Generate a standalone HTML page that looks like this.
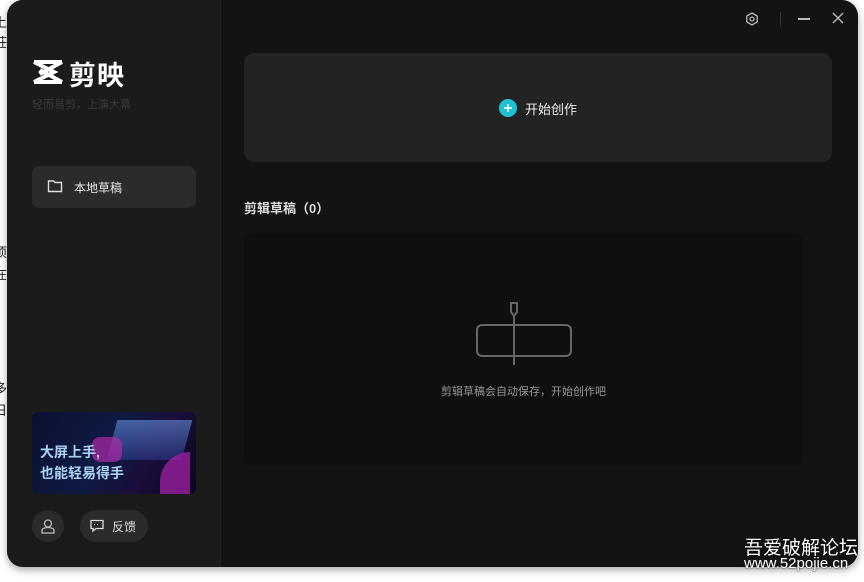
<!DOCTYPE html>
<html><head><meta charset="utf-8"><style>
*{margin:0;padding:0;box-sizing:border-box}
body{width:864px;height:582px;background:#fff;position:relative;overflow:hidden;font-family:"Liberation Sans","Noto Sans CJK SC",sans-serif}
.win{position:absolute;left:7px;top:0;width:851px;height:567px;border-radius:16px;background:#131313;overflow:hidden;box-shadow:0 3px 8px rgba(0,0,0,.35)}
.side{position:absolute;left:0;top:0;width:214px;height:567px;background:#1b1b1b;border-right:1px solid #222}
.abs{position:absolute}
.edge{position:absolute;font-size:13px;color:#222;left:-6px}
</style></head><body>
<div class="edge" style="top:12px">上</div><div class="edge" style="top:32px">莊</div>
<div class="edge" style="top:242px">项</div><div class="edge" style="top:264px">在</div>
<div class="edge" style="top:378px">多</div><div class="edge" style="top:400px">日</div>
<div class="win">
<div class="side">
 <svg class="abs" style="left:25px;top:60px" width="32" height="24" viewBox="0 0 32 24"><path d="M2 2h28M2 22h28M30 2L8 14a3 3 0 0 0 0-4M30 22L8 10" fill="none" stroke="#fff" stroke-width="4"/><path d="M2 2l20 10-20 10" fill="none" stroke="#fff" stroke-width="4"/></svg>
 <div class="abs" style="left:62px;top:54px;font-size:27px;font-weight:bold;color:#fff;letter-spacing:1px">剪映</div>
 <div class="abs" style="left:25px;top:96px;font-size:11px;color:#3a3a3a">轻而易剪，上演大幕</div>
 <div class="abs" style="left:25px;top:166px;width:164px;height:42px;border-radius:8px;background:#2b2b2b"></div>
 <svg class="abs" style="left:40px;top:179px" width="16" height="14" viewBox="0 0 16 14"><path d="M1.5 2h5l1.5 1.5h6.5v9h-13z" fill="none" stroke="#ddd" stroke-width="1.4"/></svg>
 <div class="abs" style="left:67px;top:179px;font-size:12px;color:#e8e8e8">本地草稿</div>
 <div class="abs" style="left:25px;top:412px;width:164px;height:82px;border-radius:6px;overflow:hidden;background:linear-gradient(120deg,#0a1030 0%,#101a44 45%,#1a0d3a 70%,#08081a 100%)">
  <div class="abs" style="left:80px;top:8px;width:75px;height:40px;background:linear-gradient(180deg,rgba(120,170,255,.5),rgba(60,100,220,.3));transform:skewX(-15deg)"></div>
  <div class="abs" style="left:60px;top:25px;width:30px;height:25px;background:#b02aa8;border-radius:8px;opacity:.7"></div>
  <div class="abs" style="left:128px;top:40px;width:30px;height:42px;background:#9a1ea0;border-radius:30px 0 0 0;opacity:.8"></div>
  <div class="abs" style="left:8px;top:30px;font-size:14px;font-weight:bold;color:#a9d4f5;line-height:21px">大屏上手,<br>也能轻易得手</div>
 </div>
 <div class="abs" style="left:25px;top:510px;width:32px;height:32px;border-radius:50%;background:#2b2b2b"></div>
 <svg class="abs" style="left:32px;top:517px" width="18" height="18" viewBox="0 0 18 18"><circle cx="9" cy="6.5" r="3.5" fill="none" stroke="#bbb" stroke-width="1.3"/><path d="M3 16v-2.5c0-1.5 2-3 6-3s6 1.5 6 3V16z" fill="none" stroke="#bbb" stroke-width="1.3"/></svg>
 <div class="abs" style="left:73px;top:510px;width:68px;height:32px;border-radius:16px;background:#2b2b2b"></div>
 <svg class="abs" style="left:83px;top:519px" width="14" height="14" viewBox="0 0 14 14"><path d="M1 1.5h12v8H6l-3 2.5v-2.5H1z" fill="none" stroke="#ddd" stroke-width="1.3"/><path d="M4 5.5h1M7 5.5h1M10 5.5h0" stroke="#ddd" stroke-width="1.3"/></svg>
 <div class="abs" style="left:105px;top:518px;font-size:12px;color:#ddd">反馈</div>
</div>
<svg class="abs" style="left:738px;top:12px" width="14" height="14" viewBox="0 0 14 14"><path d="M7 1l5.2 3v6L7 13 1.8 10V4z" fill="none" stroke="#bbb" stroke-width="1.3"/><circle cx="7" cy="7" r="2" fill="none" stroke="#bbb" stroke-width="1.3"/></svg>
<div class="abs" style="left:773px;top:12px;width:1px;height:14px;background:#333"></div>
<div class="abs" style="left:791px;top:18px;width:12px;height:1.5px;background:#bbb"></div>
<svg class="abs" style="left:825px;top:12px" width="12" height="12" viewBox="0 0 12 12"><path d="M1 1l10 10M11 1L1 11" stroke="#bbb" stroke-width="1.3"/></svg>
<div class="abs" style="left:237px;top:53px;width:588px;height:109px;border-radius:10px;background:#232323"></div>
<div class="abs" style="left:492px;top:99px;width:18px;height:18px;border-radius:50%;background:#1fc1d4"></div>
<svg class="abs" style="left:492px;top:99px" width="18" height="18" viewBox="0 0 18 18"><path d="M9 5v8M5 9h8" stroke="#fff" stroke-width="1.5"/></svg>
<div class="abs" style="left:518px;top:99px;font-size:13px;color:#eee">开始创作</div>
<div class="abs" style="left:237px;top:198px;font-size:13px;font-weight:bold;color:#ddd">剪辑草稿（0）</div>
<div class="abs" style="left:237px;top:233px;width:559px;height:232px;border-radius:6px;background:#0f0f0f"></div>
<svg class="abs" style="left:468px;top:300px" width="98" height="66" viewBox="0 0 98 66"><rect x="2" y="25" width="94" height="31" rx="5" fill="none" stroke="#666" stroke-width="2"/><path d="M36 3h6v9l-3 4-3-4z" fill="none" stroke="#666" stroke-width="2"/><path d="M39 16v49" stroke="#666" stroke-width="2"/></svg>
<div class="abs" style="left:434px;top:383px;font-size:11px;color:#999">剪辑草稿会自动保存，开始创作吧</div>
<div class="abs" style="left:737px;top:533px;font-size:19px;color:#fff;text-shadow:0 0 2px #000">吾爱破解论坛</div>
</div>
<div class="abs" style="left:744px;top:555px;font-size:15px;color:#fff;text-shadow:0 0 2px #333,0 0 1px #000">www.52pojie.cn</div>
</body></html>
